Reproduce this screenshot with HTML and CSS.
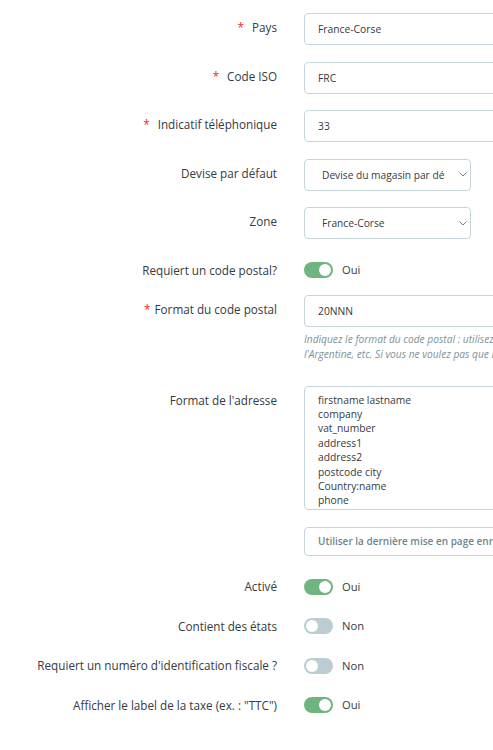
FILE: index.html
```html
<!DOCTYPE html>
<html lang="fr">
<head>
<meta charset="utf-8">
<title>Pays</title>
<link rel="stylesheet" href="styles.css">
</head>
<body>
<form class="form">
  <div class="row">
    <label class="label"><span class="req req-wide">*</span>Pays</label>
    <div class="ctrl"><div class="input">France-Corse</div></div>
  </div>
  <div class="row">
    <label class="label"><span class="req req-wide">*</span>Code ISO</label>
    <div class="ctrl"><div class="input">FRC</div></div>
  </div>
  <div class="row">
    <label class="label"><span class="req req-wide">*</span>Indicatif téléphonique</label>
    <div class="ctrl"><div class="input">33</div></div>
  </div>
  <div class="row">
    <label class="label">Devise par défaut</label>
    <div class="ctrl">
      <div class="select"><span class="select-text">Devise du magasin par défaut</span>
        <svg class="chev" width="8" height="5" viewBox="0 0 8 5"><polyline points="0.5,0.5 4,4 7.5,0.5" fill="none" stroke="#6c868e" stroke-width="1"/></svg>
      </div>
    </div>
  </div>
  <div class="row">
    <label class="label">Zone</label>
    <div class="ctrl">
      <div class="select"><span class="select-text">France-Corse</span>
        <svg class="chev" width="8" height="5" viewBox="0 0 8 5"><polyline points="0.5,0.5 4,4 7.5,0.5" fill="none" stroke="#6c868e" stroke-width="1"/></svg>
      </div>
    </div>
  </div>
  <div class="row">
    <label class="label">Requiert un code postal?</label>
    <div class="ctrl ctrl-switch"><span class="switch on"><span class="knob"></span></span><span class="switch-text">Oui</span></div>
  </div>
  <div class="row">
    <label class="label"><span class="req">*</span>Format du code postal</label>
    <div class="ctrl">
      <div class="input">20NNN</div>
      <p class="help"><span class="help-line">Indiquez le format du code postal : utilisez L pour une lettre, N pour un chiffre et C pour le code ISO du pays. Par exemple, NNNNN pour les États-Unis, la France, l'Espagne ; LNNNNLLL pour</span><span class="help-line">l'Argentine, etc. Si vous ne voulez pas que PrestaShop vérifie le format du code postal, laissez ce champ vide.</span></p>
    </div>
  </div>
  <div class="row">
    <label class="label">Format de l'adresse</label>
    <div class="ctrl">
      <div class="textarea"><div>firstname lastname</div><div>company</div><div>vat_number</div><div>address1</div><div>address2</div><div>postcode city</div><div>Country:name</div><div>phone</div></div>
    </div>
  </div>
  <div class="row">
    <div class="label"></div>
    <div class="ctrl"><div class="btn">Utiliser la dernière mise en page enregistrée</div></div>
  </div>
  <div class="row">
    <label class="label">Activé</label>
    <div class="ctrl ctrl-switch"><span class="switch on"><span class="knob"></span></span><span class="switch-text">Oui</span></div>
  </div>
  <div class="row">
    <label class="label">Contient des états</label>
    <div class="ctrl ctrl-switch"><span class="switch"><span class="knob"></span></span><span class="switch-text">Non</span></div>
  </div>
  <div class="row">
    <label class="label">Requiert un numéro d'identification fiscale ?</label>
    <div class="ctrl ctrl-switch"><span class="switch"><span class="knob"></span></span><span class="switch-text">Non</span></div>
  </div>
  <div class="row">
    <label class="label">Afficher le label de la taxe (ex. : "TTC")</label>
    <div class="ctrl ctrl-switch"><span class="switch on"><span class="knob"></span></span><span class="switch-text">Oui</span></div>
  </div>
</form>
</body>
</html>
```

FILE: styles.css
```css
html, body {
  margin: 0;
  padding: 0;
  overflow: hidden;
  background: #fff;
}
body {
  font-family: "Open Sans", "DejaVu Sans", sans-serif;
  color: #363a41;
}
.form {
  padding-top: 13px;
  width: 800px;
}
.row {
  display: grid;
  grid-template-columns: 278px 1fr;
  column-gap: 26px;
  margin-bottom: 16.5px;
}
.label {
  text-align: right;
  font-size: 11.7px;
  line-height: 18px;
  padding-top: 5px;
  padding-right: 1px;
  color: #363a41;
  white-space: nowrap;
}
.req {
  color: #f0262f;
  margin-right: 4px;
}
.req-wide {
  margin-right: 8px;
}
.ctrl {
  min-width: 0;
}
.input {
  box-sizing: border-box;
  width: 400px;
  height: 32px;
  border: 1px solid #c5d5da;
  border-radius: 4px;
  padding: 0 13px;
  font-size: 10.3px;
  line-height: 30px;
  color: #363a41;
}
.select {
  box-sizing: border-box;
  width: 167px;
  height: 32px;
  border: 1px solid #c5d5da;
  border-radius: 4px;
  padding: 0 0 0 17px;
  display: flex;
  align-items: center;
  font-size: 10.2px;
  color: #363a41;
}
.select-text {
  flex: 1;
  min-width: 0;
  overflow: hidden;
  white-space: nowrap;
}
.chev {
  flex: none;
  margin: 0 3px 0 14px;
}
.ctrl-switch {
  display: flex;
  align-items: center;
  padding-top: 6.5px;
  height: 16px;
}
.switch {
  position: relative;
  box-sizing: border-box;
  width: 29px;
  height: 16px;
  border-radius: 8px;
  background: #bbcdd2;
  flex: none;
}
.switch.on {
  background: #70b580;
}
.knob {
  position: absolute;
  top: 2px;
  left: 2px;
  width: 12px;
  height: 12px;
  border-radius: 50%;
  background: #fff;
}
.switch.on .knob {
  left: 15px;
}
.switch-text {
  margin-left: 9px;
  font-size: 11.2px;
  line-height: 16px;
  color: #363a41;
}
.help {
  margin: 5px 0 7.5px;
  font-size: 10.2px;
  line-height: 15px;
  font-style: italic;
  color: #7c939a;
}
.help-line {
  display: block;
  white-space: nowrap;
}
.textarea {
  box-sizing: border-box;
  width: 400px;
  height: 124px;
  border: 1px solid #c5d5da;
  border-radius: 4px;
  padding: 5.5px 13px;
  font-size: 10.3px;
  line-height: 14.4px;
  color: #363a41;
}
.btn {
  box-sizing: border-box;
  width: 400px;
  height: 29px;
  border: 1px solid #c5d5da;
  border-radius: 4px;
  padding: 0 13px;
  font-size: 10px;
  font-weight: 600;
  line-height: 27px;
  color: #6c868e;
  white-space: nowrap;
}
```
